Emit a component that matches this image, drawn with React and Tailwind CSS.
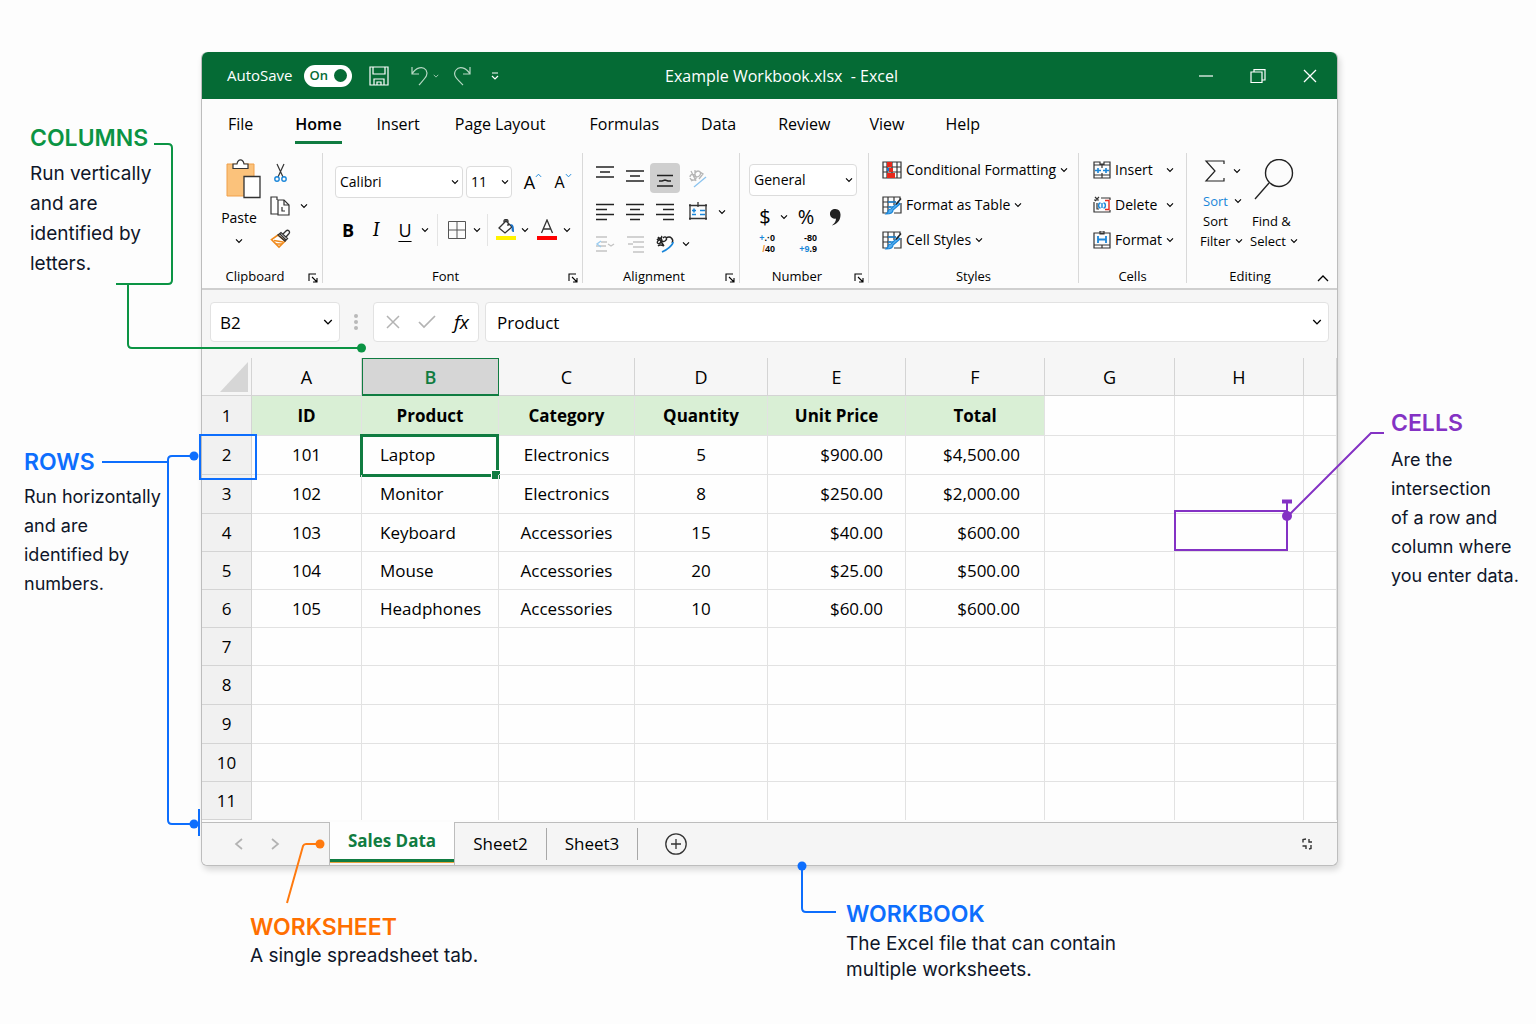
import React, { useState } from "react";

const tabs = [
  { name: "File", gap: "" },
  { name: "Home", gap: "ml-[42px]" },
  { name: "Insert", gap: "ml-[35px]" },
  { name: "Page Layout", gap: "ml-[35px]" },
  { name: "Formulas", gap: "ml-[44px]" },
  { name: "Data", gap: "ml-[42px]" },
  { name: "Review", gap: "ml-[42px]" },
  { name: "View", gap: "ml-[39px]" },
  { name: "Help", gap: "ml-[41px]" }
];

const columns = [
  { letter: "A", width: "w-[110px]" },
  { letter: "B", width: "w-[137px]" },
  { letter: "C", width: "w-[136px]" },
  { letter: "D", width: "w-[133px]" },
  { letter: "E", width: "w-[138px]" },
  { letter: "F", width: "w-[139px]" },
  { letter: "G", width: "w-[130px]" },
  { letter: "H", width: "w-[129px]" },
  { letter: "", width: "" }
];

const headings = ["ID", "Product", "Category", "Quantity", "Unit Price", "Total"];

const records = [
  ["101", "Laptop", "Electronics", "5", "$900.00", "$4,500.00"],
  ["102", "Monitor", "Electronics", "8", "$250.00", "$2,000.00"],
  ["103", "Keyboard", "Accessories", "15", "$40.00", "$600.00"],
  ["104", "Mouse", "Accessories", "20", "$25.00", "$500.00"],
  ["105", "Headphones", "Accessories", "10", "$60.00", "$600.00"]
];

const cellAlign = [
  "text-center",
  "pl-[18px]",
  "text-center",
  "text-center",
  "text-right pr-[22px]",
  "text-right pr-6"
];

const rowHeights = {
  2: "h-[39px]",
  3: "h-[39px]",
  8: "h-[39px]",
  9: "h-[39px]"
};

const Chevron = ({ className = "", size = 8 }) => (
  <svg width={size} height={size} viewBox="0 0 8 8" fill="none" stroke="currentColor" strokeWidth="1.1" className={`shrink-0 ${className}`}>
    <path d="M1 2.4 4 5.5 7 2.4" />
  </svg>
);

const MenuButton = ({ label }) => (
  <button type="button" aria-label={label} className="flex h-5 w-3 items-center justify-center">
    <Chevron />
  </button>
);

const Separator = () => <div className="mt-[3px] h-[130px] w-px shrink-0 bg-[#d9d9d9]" />;

const Group = ({ label, width, launcher, children }) => (
  <section aria-label={label} className={`flex h-[138px] shrink-0 flex-col ${width}`}>
    <div className="h-[117px]">{children}</div>
    <div className={`relative flex h-5 items-center justify-center text-[13px] ${launcher ? "pr-[14px]" : ""}`}>
      <span>{label}</span>
      {launcher && (
        <button type="button" aria-label={`${label} settings`} className="absolute right-1 top-[6px]">
          <svg width="10" height="10" viewBox="0 0 10 10" fill="none" stroke="currentColor" strokeWidth="1.1">
            <path d="M1 8V1h7M4 4l5 5M9 5v4H5" />
          </svg>
        </button>
      )}
    </div>
  </section>
);

const ClipboardGroup = () => (
  <Group label="Clipboard" width="w-[120px]" launcher>
    <div className="flex pl-[18px] pt-[9px]">
      <button type="button" className="flex w-[38px] flex-col items-center text-sm">
        <svg width="36" height="40" viewBox="0 0 36 40" fill="none" className="ml-2">
          <path d="M2 5h27v32H2z" fill="#fbc27b" stroke="#f0a04b" />
          <path d="M8 9.500V5h4c1-5.500 6-5.500 7 0h4v4.500z" fill="#fff" stroke="#333" strokeWidth="1.2" />
          <path d="M19 17.500h16v21H19z" fill="#fff" stroke="#333" strokeWidth="1.3" />
        </svg>
        <span className="mt-[9px]">Paste</span>
        <Chevron className="mt-[9px]" />
      </button>
      <div className="ml-3 flex flex-col gap-[13px] pt-1">
        <button type="button" aria-label="Cut">
          <svg width="20" height="20" viewBox="0 0 20 20" fill="none" strokeWidth="1.2">
            <path d="M7 1l6 13M14 1L8 14" stroke="#333" />
            <circle cx="7" cy="16" r="2.200" stroke="#1a86d9" strokeWidth="1.400" />
            <circle cx="14" cy="16" r="2.200" stroke="#1a86d9" strokeWidth="1.400" />
          </svg>
        </button>
        <div className="flex items-center gap-2">
          <button type="button" aria-label="Copy">
            <svg width="20" height="20" viewBox="0 0 20 20" fill="none" stroke="#333" strokeWidth="1.2">
              <path d="M8 18H1V1h6v3M8 4h6l5 5v10H8z" fill="#fff" />
              <path d="M14 4v5h5M12 11v4h3" />
            </svg>
          </button>
          <MenuButton label="Copy options" />
        </div>
        <button type="button" aria-label="Format painter">
          <svg width="22" height="20" viewBox="0 0 22 20" fill="none" strokeWidth="1.3">
            <path d="M8 6L1.500 10.500 9 18l6-6z" fill="#fff" stroke="#f08a1c" strokeWidth="1.600" />
            <path d="M4 11.500l9 1.500M6 15h6" stroke="#f08a1c" />
            <path d="M8 6l3-2.500 6.500 6L15 12zM13 5l3-3c2-2 4.500.5 3 2.500L16 8M10 5l6 6" stroke="#333" />
          </svg>
        </button>
      </div>
    </div>
  </Group>
);

const FontGroup = () => (
  <Group label="Font" width="w-[259px]" launcher>
    <div className="flex items-center pl-3 pt-4">
      <div className="relative">
        <select aria-label="Font name" className="h-8 w-32 appearance-none rounded-sm border border-[#dcdcdc] bg-white px-1 text-sm">
          <option>Calibri</option>
        </select>
        <Chevron className="pointer-events-none absolute right-1 top-3" />
      </div>
      <div className="relative ml-[3px]">
        <select aria-label="Font size" className="h-8 w-[46px] appearance-none rounded-sm border border-[#dcdcdc] bg-white px-1 text-sm">
          <option>11</option>
        </select>
        <Chevron className="pointer-events-none absolute right-[3px] top-3" />
      </div>
      <button type="button" aria-label="Increase font size" className="ml-2 flex w-[26px] justify-center text-lg leading-8">
        A
        <Chevron size={7} className="mt-[6px] rotate-180 text-[#1a86d9]" />
      </button>
      <button type="button" aria-label="Decrease font size" className="ml-1 flex w-[26px] justify-center text-base leading-8">
        A
        <Chevron size={7} className="mt-[6px] text-[#1a86d9]" />
      </button>
    </div>
    <div className="mt-4 flex h-8 items-center pl-[15px]">
      <button type="button" className="w-5 text-lg font-bold">B</button>
      <button type="button" className="ml-2 w-5 font-serif text-xl italic">I</button>
      <button type="button" className="ml-[9px] w-5 text-lg underline underline-offset-4">U</button>
      <div className="ml-1">
        <MenuButton label="Underline options" />
      </div>
      <div className="ml-[6px] h-8 w-px bg-[#e4e4e4]" />
      <button type="button" aria-label="Borders" className="ml-[9px]">
        <svg width="20" height="20" viewBox="0 0 20 20" fill="none" stroke="#555">
          <path d="M1.500 1.500h17v17h-17zM10 1.500v17M1.500 10h17" />
        </svg>
      </button>
      <div className="ml-1">
        <MenuButton label="Border options" />
      </div>
      <div className="ml-1 h-8 w-px bg-[#e4e4e4]" />
      <button type="button" aria-label="Fill colour" className="ml-2">
        <svg width="20" height="22" viewBox="0 0 20 22" fill="none">
          <path d="M3 9l7-7 6 6-7 6zM8 4V2c0-2 4-2 4 0v5" stroke="#333" strokeWidth="1.300" />
          <path d="M14 5c4 0 4 3 4 8-2 0-3-1-2-5z" fill="#1a73c9" />
          <path d="M0 17h20v4H0z" fill="#fff200" />
        </svg>
      </button>
      <div className="ml-[3px]">
        <MenuButton label="Fill options" />
      </div>
      <button type="button" aria-label="Font colour" className="ml-[6px]">
        <svg width="20" height="22" viewBox="0 0 20 22" fill="none">
          <path d="M4.500 14L10 1l5.500 13M6.500 10h7" stroke="#333" strokeWidth="1.300" />
          <path d="M0 17h20v4H0z" fill="#f00" />
        </svg>
      </button>
      <div className="ml-1">
        <MenuButton label="Font colour options" />
      </div>
    </div>
  </Group>
);

const LineIcon = ({ d, label, color = "#222" }) => (
  <button type="button" aria-label={label} className="flex h-full w-full items-center justify-center">
    <svg width="18" height="24" viewBox="0 -3 18 24" fill="none" stroke={color} strokeWidth="1.500">
      <path d={d} />
    </svg>
  </button>
);

const AlignmentGroup = () => (
  <Group label="Alignment" width="w-[156px]" launcher>
    <div className="grid grid-cols-[30px_30px_30px_36px_12px] grid-rows-[30px_38px_26px] items-center pl-[7px] pt-[13px]">
      <LineIcon label="Top align" d="M0-2h18M4 3h10M0 8h18" />
      <LineIcon label="Middle align" d="M0 2h18M4 7h10M0 12h18" />
      <div className="h-[30px] rounded-sm bg-[#cfcfcf]">
        <LineIcon label="Bottom align" d="M1 6.500h16M3 12h3l3-1 3 1h3M1 17h16" />
      </div>
      <button type="button" aria-label="Orientation" className="flex justify-center">
        <svg width="18" height="20" viewBox="0 0 18 20" fill="none" stroke="#b5b5b5" strokeWidth="1.300">
          <path d="M2 3l5 10M1 9c0-3 5-4 6 0s-5 4-6 1M6 2v7M6 5c3-4 7-1 5 2S6 9 6 7M11 4l3 2-4 5M2 13l5-2" />
          <path d="M5 19L17 9" stroke="#8cc4ef" />
        </svg>
      </button>
      <span />
      <LineIcon label="Align left" d="M0 1.500h18M0 6.500h11M0 11.500h18M0 16.500h11" />
      <LineIcon label="Centre" d="M0 1.500h18M4 6.500h10M0 11.500h18M4 16.500h10" />
      <LineIcon label="Align right" d="M0 1.500h18M7 6.500h11M0 11.500h18M7 16.500h11" />
      <button type="button" aria-label="Merge cells" className="flex justify-center">
        <svg width="18" height="20" viewBox="0 0 18 20" fill="none" stroke="#333" strokeWidth="1.300">
          <path d="M1 2v16M17 2v16M0 3.500h18M9 0v5M0 16.500h18" />
          <path d="M3 8.500h4M5 6.500v4M11 8.500h5M3 12.500h4M11 12.500h5" stroke="#1a86d9" strokeWidth="1.600" />
        </svg>
      </button>
      <MenuButton label="Merge options" />
      <button type="button" aria-label="Decrease indent" className="flex justify-center">
        <svg width="20" height="16" viewBox="0 0 20 16" fill="none" stroke="#c4c4c4" strokeWidth="1.400">
          <path d="M1 1h11M6 6h6M1 10h10M1 15h11M13 8l3 2 3-2" />
          <path d="M6 5L2 8l4 3" stroke="#9ccdf0" />
        </svg>
      </button>
      <LineIcon label="Increase indent" color="#c4c4c4" d="M1 2h17M7 7h11M2 9h5M7 12h11M7 17h11" />
      <button type="button" aria-label="Wrap text" className="flex justify-center">
        <svg width="20" height="20" viewBox="0 0 20 20" fill="none" stroke="#222" strokeWidth="1.400">
          <path d="M2 6c3-4 6-1 4 2s-6 1-2-2M3 3l6 9M7 2c-2 3 0 7 3 5s1-6-2-3M3 12c2-2 4-1 6 0M11 4c5-3 8 2 6 5" />
          <path d="M18 8c0 3-6 8-11 10" stroke="#1a86d9" strokeWidth="1.800" />
        </svg>
      </button>
      <div>
        <MenuButton label="Wrap options" />
      </div>
    </div>
  </Group>
);

const NumberGroup = () => (
  <Group label="Number" width="w-[128px]" launcher>
    <div className="pl-[9px] pt-[14px]">
      <div className="relative w-[108px]">
        <select aria-label="Number format" className="h-8 w-full appearance-none rounded-sm border border-[#dcdcdc] bg-white px-1 text-sm">
          <option>General</option>
        </select>
        <Chevron className="pointer-events-none absolute right-1 top-3" />
      </div>
      <div className="mt-[7px] flex h-7 items-center pl-2 text-xl">
        <button type="button" className="w-4">$</button>
        <div className="ml-[5px]">
          <MenuButton label="Currency options" />
        </div>
        <button type="button" className="ml-1 w-6">%</button>
        <button type="button" aria-label="Comma style" className="ml-3">
          <svg width="11" height="17" viewBox="0 0 10 16">
            <path d="M5 0a4.600 4.600 0 1 0 .5 9c-.2 3-1.500 5-4 6.500C6 14.500 10 11 9.700 5 9.500 2 8 0 5 0z" fill="#222" />
          </svg>
        </button>
      </div>
      <div className="mt-[3px] flex h-5 items-center gap-[22px] pl-[6px] font-['Liberation_Sans',sans-serif] text-[9px] font-bold leading-[11px]">
        <button type="button" aria-label="Increase decimal" className="flex w-5 flex-col items-end">
          <span><span className="text-[#1a86d9]">+</span>.·0</span>
          <span><span className="text-[#f08a1c]">/</span>40</span>
        </button>
        <button type="button" aria-label="Decrease decimal" className="flex w-5 flex-col items-end">
          <span>-80</span>
          <span><span className="text-[#1a86d9]">+9</span>.9</span>
        </button>
      </div>
    </div>
  </Group>
);

const GridIcon = ({ accent }) => (
  <svg width="20" height="20" viewBox="0 0 20 20" fill="none" stroke="#333" strokeWidth="1.200">
    {accent === "red" ? (
      <g>
        <path d="M1 2h18v16H1zM1 7h18M1 12h18M5 2v16M10 2v16M15 2v16" />
        <path d="M5 2h5v5H5zM5 13h8v5H5zM7 8h4v4H7z" fill="#e8291c" stroke="none" />
        <path d="M5 8h2v3H5z" fill="#1a73c9" stroke="none" />
      </g>
    ) : (
      <g>
        <path d="M18 4V2H1v16h4M1 7h13M1 12h8M6 2v15M12 2v8M19 8v10h-7" />
        <path d="M6 7h8M6 12h5" stroke="#1a86d9" strokeWidth="1.500" />
        <path d="M16 7L9 14c-2 0-3 1-3 3l-2 2c4 0 7-1 7-4l7-6z" fill="#5ab0ee" stroke="#1a86d9" />
        <path d="M19 3.500l-5 6" stroke="#222" strokeWidth="1.500" />
      </g>
    )}
  </svg>
);

const StylesGroup = () => (
  <Group label="Styles" width="w-[209px]">
    <div className="flex flex-col gap-[15px] pl-[13px] pt-[10px] text-sm leading-5">
      <button type="button" className="flex items-center gap-1">
        <GridIcon accent="red" />
        Conditional Formatting
        <Chevron />
      </button>
      <button type="button" className="flex items-center gap-1">
        <GridIcon />
        Format as Table
        <Chevron />
      </button>
      <button type="button" className="flex items-center gap-1">
        <GridIcon />
        Cell Styles
        <Chevron />
      </button>
    </div>
  </Group>
);

const CellsGroup = () => (
  <Group label="Cells" width="w-[107px]">
    <div className="flex flex-col gap-[15px] pl-[14px] pr-3 pt-[10px] text-sm leading-5">
      <button type="button" className="flex items-center">
        <svg width="18" height="18" viewBox="0 0 18 18" fill="none" stroke="#333" strokeWidth="1.200">
          <path d="M1 1h6v2h4V1h6v16H1zM1 4h16M1 14h16M9 4v3M9 12v5" />
          <path d="M2 9.500h6M10 9.500h6M5 7v5M13 7v5" stroke="#1a86d9" strokeWidth="1.600" />
        </svg>
        <span className="ml-1 flex-1 text-left">Insert</span>
        <Chevron />
      </button>
      <button type="button" className="flex items-center">
        <svg width="18" height="18" viewBox="0 0 18 18" fill="none" stroke="#333" strokeWidth="1.200">
          <path d="M1 6v10h16v-2M1 4h5M2 1l3 3M6 1L2 5M8 2h9v2M4 7v6h2" />
          <path d="M12 4.500h4v9h-4" stroke="#e8291c" strokeWidth="1.400" />
          <path d="M7.500 7c-2.500 0-2.500 5 0 5M10.500 7c2.500 0 2.500 5 0 5M9 7v5" stroke="#1a86d9" strokeWidth="1.400" />
        </svg>
        <span className="ml-1 flex-1 text-left">Delete</span>
        <Chevron />
      </button>
      <button type="button" className="flex items-center">
        <svg width="18" height="18" viewBox="0 0 18 18" fill="none" stroke="#333" strokeWidth="1.200">
          <path d="M1 2h16v15H1zM1 14h16M7 0h4v3H7zM9 14v3" />
          <path d="M5 5v7M13 5v7M5 8.500h8" stroke="#1a86d9" strokeWidth="1.800" />
        </svg>
        <span className="ml-1 flex-1 text-left">Format</span>
        <Chevron />
      </button>
    </div>
  </Group>
);

const EditingGroup = () => (
  <Group label="Editing" width="w-[126px]">
    <div className="flex gap-[6px] pl-[13px] pt-[9px] text-[13px] leading-5">
      <div className="flex w-11 flex-col">
        <button type="button" aria-label="AutoSum" className="flex h-8 items-start gap-[7px] pl-1">
          <svg width="22" height="24" viewBox="0 0 22 24" fill="none" stroke="#222" strokeWidth="1.200">
            <path d="M20 5V2H2l9 10L2 22h18v-3" />
          </svg>
          <Chevron className="mt-2" />
        </button>
        <button type="button" className="flex items-center gap-[6px] pl-[3px] text-[#1a86d9]">
          Sort
          <Chevron className="text-black" />
        </button>
        <button type="button" className="pl-[3px] text-left">
          <span className="block">Sort</span>
          <span className="-ml-[3px] flex items-center gap-1">
            Filter
            <Chevron />
          </span>
        </button>
      </div>
      <button type="button" className="flex w-14 flex-col items-start">
        <svg width="42" height="42" viewBox="0 0 42 42" fill="none" stroke="#222" strokeWidth="1.400" className="ml-[3px]">
          <circle cx="26" cy="14" r="13.500" />
          <path d="M16 24L2 40" />
        </svg>
        <span className="mt-[10px] pl-[2px]">Find &amp;</span>
        <span className="flex items-center gap-1">
          Select
          <Chevron />
        </span>
      </button>
    </div>
  </Group>
);

const TitleBar = () => (
  <header className="grid h-[47px] grid-cols-[1fr_auto_1fr] items-center rounded-t-md bg-[#056b35] text-white">
    <div className="flex items-center pl-[25px]">
      <label className="flex items-center gap-[11px] text-[15px]">
        AutoSave
        <input type="checkbox" defaultChecked className="sr-only" />
        <span className="flex h-[22px] w-12 items-center justify-between rounded-full bg-white pl-[6px] pr-[5px] text-[13px] font-semibold text-[#056b35]">
          On
          <span className="h-[13px] w-[13px] rounded-full bg-[#056b35]" />
        </span>
      </label>
      <button type="button" aria-label="Save" className="ml-[17px]">
        <svg width="20" height="20" viewBox="0 0 20 20" fill="none" stroke="currentColor" strokeWidth="1.200">
          <path d="M1 1h18v18H1zM4 1v7h12V1M5 19v-6h10v6M8 19v-3h4v3" />
        </svg>
      </button>
      <button type="button" aria-label="Undo" className="ml-[22px] text-[#b7d8c4]">
        <svg width="18" height="20" viewBox="0 0 18 20" fill="none" stroke="currentColor" strokeWidth="1.200">
          <path d="M1 1v7h7M1 8C5 1 12 0 15 4c3 5-1 8-7 15" />
        </svg>
      </button>
      <Chevron size={6} className="ml-1 text-[#b7d8c4]" />
      <button type="button" aria-label="Redo" className="ml-[14px] text-[#b7d8c4]">
        <svg width="18" height="20" viewBox="0 0 18 20" fill="none" stroke="currentColor" strokeWidth="1.200">
          <path d="M17 1v7h-7M17 8C13 1 6 0 3 4c-4 5 1 9 7 15" />
        </svg>
      </button>
      <button type="button" aria-label="Customise toolbar" className="ml-5">
        <svg width="8" height="8" viewBox="0 0 8 8" fill="none" stroke="currentColor" strokeWidth="1.200">
          <path d="M1 1h6M1 4l3 3 3-3" />
        </svg>
      </button>
    </div>
    <h1 className="pl-6 text-base">Example Workbook.xlsx&nbsp; - Excel</h1>
    <div className="flex items-center justify-end gap-[37px] pr-5">
      <button type="button" aria-label="Minimise">
        <svg width="14" height="14" viewBox="0 0 14 14" stroke="currentColor" strokeWidth="1.200">
          <path d="M0 7h14" />
        </svg>
      </button>
      <button type="button" aria-label="Restore">
        <svg width="16" height="14" viewBox="0 0 16 14" fill="none" stroke="currentColor" strokeWidth="1.200">
          <path d="M1 3h11v10.500H1zM4 3V.7h11V11h-3" />
        </svg>
      </button>
      <button type="button" aria-label="Close">
        <svg width="14" height="14" viewBox="0 0 14 14" stroke="currentColor" strokeWidth="1.300">
          <path d="M1 1l12 12M13 1L1 13" />
        </svg>
      </button>
    </div>
  </header>
);

const FormulaBar = () => (
  <div className="flex h-[68px] items-start bg-[#f6f6f6] px-2 pt-3">
    <div className="relative w-[130px]">
      <input aria-label="Name box" defaultValue="B2" className="h-10 w-full rounded-sm border border-[#e2e2e2] bg-white px-[9px] text-[17px]" />
      <button type="button" aria-label="Named ranges" className="absolute right-[7px] top-[15px]">
        <Chevron size={10} />
      </button>
    </div>
    <div className="ml-[14px] flex h-10 w-1 flex-col items-center justify-center gap-[2px]">
      <span className="h-1 w-1 rounded-full bg-[#b9b9b9]" />
      <span className="h-1 w-1 rounded-full bg-[#b9b9b9]" />
      <span className="h-1 w-1 rounded-full bg-[#b9b9b9]" />
    </div>
    <div className="ml-[15px] flex h-10 w-[106px] items-center justify-between rounded-sm border border-[#e2e2e2] bg-white pl-3 pr-[9px] text-[#b3b3b3]">
      <button type="button" aria-label="Cancel">
        <svg width="14" height="14" viewBox="0 0 14 14" stroke="currentColor" strokeWidth="1.500">
          <path d="M1 1l12 12M13 1L1 13" />
        </svg>
      </button>
      <button type="button" aria-label="Enter">
        <svg width="18" height="14" viewBox="0 0 18 14" fill="none" stroke="currentColor" strokeWidth="1.700">
          <path d="M1 7l5 5L17 1" />
        </svg>
      </button>
      <button type="button" className="text-[19px] italic text-black">fx</button>
    </div>
    <div className="relative ml-[6px] flex-1">
      <input aria-label="Formula" defaultValue="Product" className="h-10 w-full rounded-sm border border-[#e2e2e2] bg-white px-[11px] text-[17px]" />
      <button type="button" aria-label="Expand formula bar" className="absolute right-[7px] top-[15px]">
        <Chevron size={10} />
      </button>
    </div>
  </div>
);

const CellMarker = () => (
  <div className="pointer-events-none absolute -left-px -top-1 z-10 h-[41px] w-[114px] border-2 border-[#8432c4]">
    <svg width="106" height="92" viewBox="0 0 106 92" fill="none" stroke="#8432c4" strokeWidth="2" className="absolute -top-[81px] left-[104px]">
      <path d="M7 86L91 2h13M7 86V70" />
      <path d="M2 70.500h10" strokeWidth="4" />
      <circle cx="7" cy="85" r="5" fill="#8432c4" stroke="none" />
    </svg>
  </div>
);

const Sheet = () => {
  const rows = Array.from({ length: 11 }, (_, i) => i + 1);

  const cellText = (row, col) => {
    if (row === 1) return headings[col];
    return records[row - 2] ? records[row - 2][col] : "";
  };

  return (
    <table className="w-full table-fixed border-separate border-spacing-0 bg-[#fefefe] text-[17px]">
      <thead>
        <tr className="h-[38px] bg-[#f6f6f6]">
          <th aria-label="Select all" className="w-[50px] border-b border-r border-[#d4d4d4] p-0">
            <svg width="28" height="30" viewBox="0 0 28 30" className="ml-auto mr-[3px]">
              <path d="M28 0v30H0z" fill="#d6d6d6" />
            </svg>
          </th>
          {columns.map(({ letter, width }, i) => (
            <th
              key={i}
              scope="col"
              className={`${width} p-0 text-lg ${
                letter === "B"
                  ? "border border-b-2 border-[#107c41] bg-[#d6d6d6] font-semibold text-[#107c41]"
                  : "border-b border-r border-[#d4d4d4] font-normal"
              }`}
            >
              {letter}
            </th>
          ))}
        </tr>
      </thead>
      <tbody>
        {rows.map((row) => (
          <tr key={row} className={row === 1 ? "h-10" : rowHeights[row] || "h-[38px]"}>
            <th scope="row" className="relative border-b border-r border-[#d4d4d4] bg-[#f1f1f1] p-0 font-normal">
              {row}
              {row === 2 && (
                <div className="pointer-events-none absolute -left-[3px] -top-[2px] z-10 h-[46px] w-[58px] border-2 border-[#0d6efd]" />
              )}
            </th>
            {columns.map(({ letter }, col) => (
              <td
                key={col}
                className={`relative border-r border-[#e2e2e2] py-0 ${row < 11 ? "border-b" : ""} ${
                  row === 1 && col < 6 ? "bg-[#d9efd5] px-0 text-center font-bold" : cellAlign[col] || ""
                }`}
              >
                {cellText(row, col)}
                {row === 2 && letter === "B" && (
                  <div className="pointer-events-none absolute -left-[2px] -top-[2px] h-[43px] w-[139px] border-[3px] border-[#107c41]">
                    <span className="absolute -bottom-[6px] -right-[5px] h-[10px] w-[10px] border border-white bg-[#107c41]" />
                  </div>
                )}
                {row === 4 && letter === "H" && <CellMarker />}
              </td>
            ))}
          </tr>
        ))}
      </tbody>
    </table>
  );
};

const SheetTabs = () => (
  <footer className="mt-[2px] flex h-[43px] items-stretch rounded-b-md border-t border-[#bdbdbd] bg-[#f5f5f5] text-[17px]">
    <div className="flex w-32 items-center gap-[26px] border-r border-[#bdbdbd] pl-8 text-[#b3b3b3]">
      <button type="button" aria-label="Previous sheet">
        <svg width="10" height="12" viewBox="0 0 10 12" fill="none" stroke="currentColor" strokeWidth="1.700">
          <path d="M8 1L2 6l6 5" />
        </svg>
      </button>
      <button type="button" aria-label="Next sheet">
        <svg width="10" height="12" viewBox="0 0 10 12" fill="none" stroke="currentColor" strokeWidth="1.700">
          <path d="M2 1l6 5-6 5" />
        </svg>
      </button>
    </div>
    <button type="button" className="-mt-px mb-[3px] w-[124px] border-b-[3px] border-[#107c41] bg-[#fefefe] font-bold text-[#107c41] shadow-[0_1px_0_#e8a33d]">
      Sales Data
    </button>
    <div className="flex flex-1 items-center border-l border-[#bdbdbd]">
      <button type="button" className="h-8 w-[92px] border-r border-[#a8a8a8]">Sheet2</button>
      <button type="button" className="h-8 w-[91px] border-r border-[#a8a8a8]">Sheet3</button>
      <button type="button" aria-label="New sheet" className="ml-[27px]">
        <svg width="22" height="22" viewBox="0 0 22 22" fill="none" stroke="#333" strokeWidth="1.300">
          <circle cx="11" cy="11" r="10.200" />
          <path d="M11 6v10M6 11h10" />
        </svg>
      </button>
      <svg width="12" height="12" viewBox="0 0 12 12" fill="none" stroke="#333" strokeWidth="1.400" className="ml-auto mr-6">
        <path d="M5 1L2 1.500v3M8 1v3h3M5 11V8H1.500M8 11l2-.5V7" />
      </svg>
    </div>
  </footer>
);

const Note = ({ title, color, lines, body }) => (
  <div className="text-[#0f1629]">
    <h2 className={`text-[23px] font-semibold leading-[30px] ${color}`}>{title}</h2>
    <p className={body}>
      {lines.map((line) => (
        <span key={line} className="block whitespace-nowrap">{line}</span>
      ))}
    </p>
  </div>
);

const App = () => {
  const [activeTab, setActiveTab] = useState("Home");

  return (
    <div className="flex min-h-screen bg-[#fdfdfd] font-['Inter',sans-serif] text-black">
      <aside className="relative w-[201px] shrink-0 pl-6 pt-[123px]">
        <div className="pl-[6px]">
          <Note
            title="COLUMNS"
            color="text-[#0b9444]"
            lines={["Run vertically", "and are", "identified by", "letters."]}
            body="mt-[6px] text-[19px] leading-[30px]"
          />
        </div>
        <div className="mt-[168px]">
          <Note
            title="ROWS"
            color="text-[#0d6efd]"
            lines={["Run horizontally", "and are", "identified by", "numbers."]}
            body="mt-[5px] text-[18px] leading-[29px]"
          />
        </div>
        {/* connector lines from the notes to the sheet */}
        <svg width="370" height="840" viewBox="0 0 370 840" fill="none" strokeWidth="2" className="pointer-events-none absolute left-0 top-0 z-10">
          <g stroke="#0b9444">
            <path d="M154 144h14q4 0 4 4v132q0 4-4 4h-52M128 283v61q0 4 4 4h230" />
            <circle cx="361.500" cy="348" r="4.500" fill="#0b9444" stroke="none" />
          </g>
          <g stroke="#0d6efd">
            <path d="M102 462h66M194 456h-22q-4 0-4 4v360q0 4 4 4h22M199 809v27" />
            <circle cx="194" cy="456" r="4.500" fill="#0d6efd" stroke="none" />
            <circle cx="194" cy="824" r="4.500" fill="#0d6efd" stroke="none" />
          </g>
        </svg>
      </aside>

      <main className="min-w-0 flex-1 pt-[52px]">
        <div className="rounded-md border-x border-b border-[#bdbdbd] bg-[#fcfcfc] font-['Open_Sans',sans-serif] shadow-[2px_4px_6px_rgba(0,0,0,0.15)]">
          <TitleBar />
          <nav className="flex h-[51px] items-start pl-[26px] pt-[11px] text-base leading-7">
            {tabs.map(({ name, gap }) => (
              <button
                key={name}
                type="button"
                onClick={() => setActiveTab(name)}
                className={`h-[34px] border-b-[3px] pb-[3px] ${gap} ${
                  activeTab === name ? "border-[#107c41] font-semibold" : "border-transparent"
                }`}
              >
                {name}
              </button>
            ))}
          </nav>
          <div className="flex border-b-2 border-[#cfcfcf]">
            <ClipboardGroup />
            <Separator />
            <FontGroup />
            <Separator />
            <AlignmentGroup />
            <Separator />
            <NumberGroup />
            <Separator />
            <StylesGroup />
            <Separator />
            <CellsGroup />
            <Separator />
            <EditingGroup />
            <button type="button" aria-label="Collapse ribbon" className="mb-[6px] ml-auto mr-2 self-end">
              <svg width="12" height="8" viewBox="0 0 12 8" fill="none" stroke="currentColor" strokeWidth="1.300">
                <path d="M1 7l5-5 5 5" />
              </svg>
            </button>
          </div>
          <FormulaBar />
          <Sheet />
          <SheetTabs />
        </div>

        <div className="flex">
          <div className="relative ml-[49px] w-[596px] pt-[46px]">
            <Note
              title="WORKSHEET"
              color="text-[#ff6f00]"
              lines={["A single spreadsheet tab."]}
              body="text-[19px] leading-7"
            />
            <svg width="40" height="66" viewBox="0 0 40 66" fill="none" stroke="#ff7a0f" strokeWidth="2" className="pointer-events-none absolute -top-[28px] left-[35px]">
              <path d="M2 65L18 8q1-2 3-2h14" />
              <circle cx="35" cy="6" r="4.500" fill="#ff7a0f" stroke="none" />
            </svg>
          </div>
          <div className="relative pt-[33px]">
            <Note
              title="WORKBOOK"
              color="text-[#0d6efd]"
              lines={["The Excel file that can contain", "multiple worksheets."]}
              body="mt-[2px] text-[19px] leading-[26px]"
            />
            <svg width="42" height="54" viewBox="0 0 42 54" fill="none" stroke="#0d6efd" strokeWidth="2" className="pointer-events-none absolute -left-[50px] -top-[5px]">
              <path d="M6 5v42q0 4 4 4h30" />
              <circle cx="6" cy="5" r="4.500" fill="#0d6efd" stroke="none" />
            </svg>
          </div>
        </div>
      </main>

      <aside className="w-[198px] shrink-0 pl-[53px] pt-[408px]">
        <Note
          title="CELLS"
          color="text-[#8432c4]"
          lines={["Are the", "intersection", "of a row and", "column where", "you enter data."]}
          body="mt-[7px] text-[18px] leading-[29px]"
        />
      </aside>
    </div>
  );
};

export default App;
